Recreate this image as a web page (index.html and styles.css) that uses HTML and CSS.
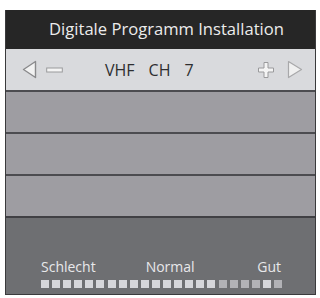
FILE: index.html
```html
<!DOCTYPE html>
<html>
<head>
<meta charset="utf-8">
<link rel="stylesheet" href="styles.css">
</head>
<body>
<div class="panel">
  <div class="header">Digitale Programm Installation</div>
  <div class="chanbar">
    <div class="ctl-left">
      <svg class="tri" width="15" height="19" viewBox="0 0 15 19"><polygon points="13.5,1.5 1.5,9.5 13.5,17.5" fill="#f2f2f2" stroke="#8a8a8c" stroke-width="1.4" stroke-linejoin="round"/></svg>
      <svg class="minus" width="17" height="6" viewBox="0 0 17 6"><rect x="0.7" y="1" width="15.6" height="4" fill="#f4f4f4" stroke="#9a9a9c" stroke-width="1"/></svg>
    </div>
    <div class="chan"><span>VHF</span><span>CH</span><span>7</span></div>
    <div class="ctl-right">
      <svg class="plus" width="18" height="18" viewBox="0 0 18 18"><path d="M7 1.5h4v5.5h5.5v4h-5.5v5.5h-4v-5.5h-5.5v-4h5.5z" fill="#f4f4f4" stroke="#9a9a9c" stroke-width="1"/></svg>
      <svg class="tri" width="16" height="19" viewBox="0 0 16 19"><polygon points="1.5,1.5 14.5,9.5 1.5,17.5" fill="#f0f0f0" stroke="#a8a8aa" stroke-width="1.2" stroke-linejoin="round"/></svg>
    </div>
  </div>
  <div class="row"></div>
  <div class="row"></div>
  <div class="row"></div>
  <div class="signal">
    <div class="labels"><span>Schlecht</span><span class="mid">Normal</span><span class="end">Gut</span></div>
    <div class="bars">
      <i class="on"></i><i class="on"></i><i class="on"></i><i class="on"></i><i class="on"></i><i class="on"></i><i class="on"></i><i class="on"></i><i class="on"></i><i class="on"></i><i class="on"></i><i class="on"></i><i class="on"></i><i class="on"></i><i class="on"></i><i class="on"></i><i class="off"></i><i class="off"></i><i class="off"></i><i class="off"></i><i class="on"></i><i class="off"></i>
    </div>
  </div>
</div>
</body>
</html>
```
FILE: styles.css
```css
html, body {
  margin: 0;
  padding: 0;
  background: #ffffff;
}
body {
  font-family: "Open Sans", "Liberation Sans", sans-serif;
  width: 320px;
  height: 298px;
  overflow: hidden;
}
.panel {
  margin: 10px 0 0 5px;
  width: 311px;
  border-left: 1px solid #3a3a3c;
  border-right: 1px solid #3a3a3c;
  box-sizing: border-box;
}
.header {
  height: 39px;
  background: #262626;
  color: #ececec;
  font-size: 16.6px;
  line-height: 37px;
  text-align: center;
  padding-left: 12px;
}
.chanbar {
  height: 41px;
  background: #d9dadd;
  display: flex;
  align-items: center;
  padding: 0 12px 0 16px;
  box-sizing: border-box;
}
.ctl-left, .ctl-right {
  display: flex;
  align-items: center;
  gap: 9px;
  width: 60px;
}
.ctl-right {
  justify-content: flex-end;
  gap: 12px;
}
.chan {
  flex: 1;
  display: flex;
  gap: 14px;
  padding-left: 23px;
  color: #2e2e30;
  font-size: 16px;
}
.row {
  height: 40px;
  background: #9e9da2;
  border-top: 2px solid #4c4c50;
}
.signal {
  height: 79px;
  background: #6e6f72;
  border-top: 2px solid #404044;
  border-bottom: 1px solid #3a3a3c;
  display: flex;
  flex-direction: column;
  justify-content: flex-end;
  padding: 0 32px 6px 35px;
  box-sizing: border-box;
}
.labels {
  display: flex;
  color: #e8e8ea;
  font-size: 14px;
  line-height: 18px;
  padding-right: 2px;
}
.labels .mid {
  margin-left: 50px;
}
.labels .end {
  margin-left: auto;
}
.bars {
  display: flex;
  gap: 3.1px;
  margin-top: 4px;
}
.bars i {
  display: block;
  width: 8px;
  height: 8px;
}
.bars .on { background: #d6d6da; }
.bars .off { background: #b2b2b6; }
```
